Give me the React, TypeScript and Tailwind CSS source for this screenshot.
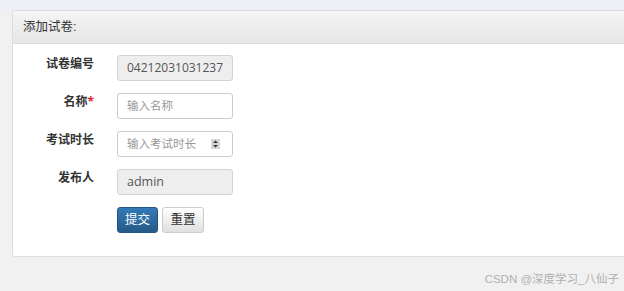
import React from 'react';

const font = { fontFamily: '"Liberation Sans", "Noto Sans CJK SC", sans-serif' };
const inputFont = { fontFamily: '"Open Sans", "Noto Sans CJK SC", sans-serif' };

function Row({ label, required, children }: { label: string; required?: boolean; children: React.ReactNode }) {
  return (
    <div className="flex items-start">
      <div className="w-[81px] text-right text-[12px] font-bold text-[#333] leading-[17px]">
        {label}
        {required && <span className="text-[#e3262b]">*</span>}
      </div>
      <div className="ml-[23px]">{children}</div>
    </div>
  );
}

export default function App() {
  return (
    <div className="w-[624px] h-[291px] bg-[#f1f1f1] overflow-hidden relative" style={font}>
      <div className="h-[10px] bg-[#edf0f6]" />
      {/* Panel */}
      <div className="ml-[12px] w-[620px] h-[247px] bg-white border border-[#dddddd] rounded-[3px] overflow-hidden">
        <div className="h-[33px] bg-gradient-to-b from-[#f5f5f5] to-[#e6e6e6] border-b border-[#dddddd] flex items-center pl-[10px] text-[12.5px] text-[#333]">
          添加试卷:
        </div>
        <div className="pt-[11px] flex flex-col gap-[12px]" style={inputFont}>
          <Row label="试卷编号">
            <div className="w-[116px] h-[26px] rounded-[3px] border border-[#d4d4d4] bg-[#eeeeee] flex items-center pl-[9px] text-[12px] text-[#555]">
              04212031031237
            </div>
          </Row>
          <Row label="名称" required>
            <div className="w-[116px] h-[26px] rounded-[3px] border border-[#cccccc] bg-white flex items-center pl-[9px] text-[11.5px] text-[#999]">
              输入名称
            </div>
          </Row>
          <Row label="考试时长">
            <div className="w-[116px] h-[26px] rounded-[3px] border border-[#cccccc] bg-white flex items-center pl-[9px] pr-[12px] text-[11.5px] text-[#999]">
              <span className="flex-1">输入考试时长</span>
              <svg width="9" height="10" viewBox="0 0 9 10">
                <rect x="0" y="0" width="9" height="10" fill="#d6d6d6" />
                <path d="M2 4 L4.5 1.5 L7 4 Z" fill="#333" />
                <path d="M2 6 L4.5 8.5 L7 6 Z" fill="#333" />
              </svg>
            </div>
          </Row>
          <Row label="发布人">
            <div className="w-[116px] h-[26px] rounded-[3px] border border-[#d4d4d4] bg-[#eeeeee] flex items-center pl-[9px] text-[12.5px] text-[#555]">
              admin
            </div>
          </Row>
          <div className="flex ml-[104px] gap-[4px]">
            <button className="w-[41px] h-[26px] rounded-[3px] border border-[#245580] bg-gradient-to-b from-[#337ab7] to-[#265a88] text-white text-[12.5px]">
              提交
            </button>
            <button className="w-[42px] h-[26px] rounded-[3px] border border-[#cccccc] bg-gradient-to-b from-white to-[#e0e0e0] text-[#333] text-[12.5px]">
              重置
            </button>
          </div>
        </div>
      </div>
      <div className="absolute right-[5px] bottom-[3px] text-[11.5px] text-[#b0b0b0]">
        CSDN @深度学习_八仙子
      </div>
    </div>
  );
}
